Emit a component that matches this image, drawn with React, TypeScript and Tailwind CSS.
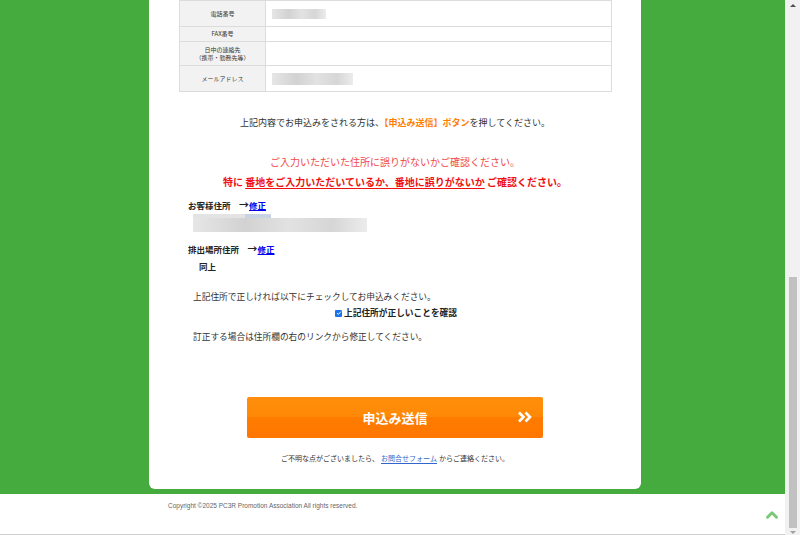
import { ChevronUp } from "lucide-react";

const jp = "font-['Meiryo','Noto_Sans_CJK_JP',sans-serif]";

function Blur({ className }: { className: string }) {
  return <div className={`bg-[linear-gradient(90deg,#e6e6e6,#d2d2d2_30%,#e2e2e2_55%,#d6d6d6_80%,#ececec)] ${className}`} />;
}

function InfoTable() {
  const rows = [
    { label: ["電話番号"], h: "h-[26px]", value: <Blur className="w-[54px] h-[10px]" /> },
    { label: ["FAX番号"], h: "h-[15px]", value: null },
    { label: ["日中の連絡先", "（携帯・勤務先等）"], h: "h-[24px]", value: null },
    { label: ["メールアドレス"], h: "h-[26px]", value: <Blur className="w-[81px] h-[12px]" /> },
  ];
  return (
    <table className="ml-[30px] w-[433px] border-collapse text-[#333]">
      <tbody>
        {rows.map((r) => (
          <tr key={r.label[0]} className={r.h}>
            <td className="w-[86px] border border-[#dcdcdc] bg-[#f2f2f2] text-center text-[6px] leading-[8px]">
              {r.label.map((l) => (
                <div key={l}>{l}</div>
              ))}
            </td>
            <td className="border border-[#dcdcdc] bg-white px-[6px] align-middle">{r.value}</td>
          </tr>
        ))}
      </tbody>
    </table>
  );
}

export default function App() {
  return (
    <div className={`flex h-[535px] w-[800px] overflow-hidden ${jp}`}>
      <div className="flex w-[785px] flex-col">
        <div className="flex h-[494px] justify-center bg-[#46ab3e] pl-[5px]">
          <div className="flex h-[489px] w-[492px] flex-col rounded-b-[6px] bg-white">
            <InfoTable />

            <p className="mt-[25px] text-center text-[9px] leading-[12px] text-[#333]">
              上記内容でお申込みをされる方は、
              <span className="font-bold text-[#ff8000]">【申込み送信】ボタン</span>
              を押してください。
            </p>

            <p className="mt-[26px] text-center text-[10px] leading-[14px] text-[#f04a4a]">
              ご入力いただいた住所に誤りがないかご確認ください。
            </p>
            <p className="mt-[6px] text-center text-[10px] font-bold leading-[14px] text-[#f01010]">
              特に <span className="underline underline-offset-2">番地をご入力いただいているか、番地に誤りがないか</span> ご確認ください。
            </p>

            <div className="mt-[10px] pl-[39px] text-[8.5px] font-bold leading-[12px] text-[#222]">
              お客様住所　<span className="text-[10px]">→</span><a className="text-[#0000ee] underline">修正</a>
            </div>
            <div className="ml-[44px] mt-[3px] flex flex-col">
              <div className="flex h-[4px]">
                <div className="w-[52px] bg-[#e3e3e3]" />
                <div className="w-[26px] bg-[#c9d3e3]" />
              </div>
              <Blur className="h-[14px] w-[174px]" />
            </div>

            <div className="mt-[11px] pl-[39px] text-[8.5px] font-bold leading-[12px] text-[#222]">
              排出場所住所　<span className="text-[10px]">→</span><a className="text-[#0000ee] underline">修正</a>
            </div>
            <div className="mt-[5px] pl-[50px] text-[8.5px] font-bold leading-[12px] text-[#222]">同上</div>

            <p className="mt-[19px] pl-[44px] text-[8.7px] leading-[12px] text-[#333]">
              上記住所で正しければ以下にチェックしてお申込みください。
            </p>
            <label className="mt-[4px] flex items-center pl-[186px] text-[8.7px] font-bold leading-[12px] text-[#222]">
              <span className="mr-[2px] flex h-[7px] w-[7px] items-center justify-center rounded-[1px] bg-[#1a73e8]">
                <svg viewBox="0 0 8 8" className="h-[6px] w-[6px]">
                  <path d="M1.5 4.2 L3.2 5.8 L6.5 2.2" stroke="white" strokeWidth="1.3" fill="none" />
                </svg>
              </span>
              上記住所が正しいことを確認
            </label>
            <p className="mt-[12px] pl-[44px] text-[8.7px] leading-[12px] text-[#333]">
              訂正する場合は住所欄の右のリンクから修正してください。
            </p>

            <button className="relative ml-[98px] mt-[54px] flex h-[41px] w-[296px] items-center justify-center rounded-[2px] bg-[linear-gradient(#ff8e0c_0%,#ff8906_50%,#ff7c00_50%,#ff7600_100%)] text-[13px] font-bold text-white">
              申込み送信
              <span className="absolute right-[10px] top-[14px]">
                <svg viewBox="0 0 16 12" className="h-[12px] w-[16px]">
                  <path d="M2 1.5 L6.5 6 L2 10.5 M8.5 1.5 L13 6 L8.5 10.5" stroke="white" strokeWidth="2.6" fill="none" />
                </svg>
              </span>
            </button>

            <p className="mt-[15px] text-center text-[7px] leading-[10px] text-[#333]">
              ご不明な点がございましたら、
              <a className="mx-[2px] border-b border-[#3366cc] text-[#3366cc]">お問合せフォーム</a>
              からご連絡ください。
            </p>
          </div>
        </div>
        <div className="relative flex h-[41px] border-b border-[#cfcfcf] bg-white">
          <p className="ml-[168px] mt-[7px] font-['Liberation_Sans',sans-serif] text-[6.5px] leading-[10px] text-[#666]">
            Copyright ©2025 PC3R Promotion Association All rights reserved.
          </p>
          <ChevronUp className="absolute left-[763px] top-[12px] h-[18px] w-[18px] text-[#7cc878]" strokeWidth={4} />
        </div>
      </div>
      <div className="flex w-[15px] flex-col bg-[#f1f1f1]">
        <div className="mx-auto mt-[4px] h-0 w-0 border-x-[3px] border-b-[3px] border-x-transparent border-b-[#505050]" />
        <div className="mx-auto mt-[270px] h-[251px] w-[8px] bg-[#c1c1c1]" />
        <div className="mx-auto mt-[3px] h-0 w-0 border-x-[3px] border-t-[3px] border-x-transparent border-t-[#a0a0a0]" />
      </div>
    </div>
  );
}
